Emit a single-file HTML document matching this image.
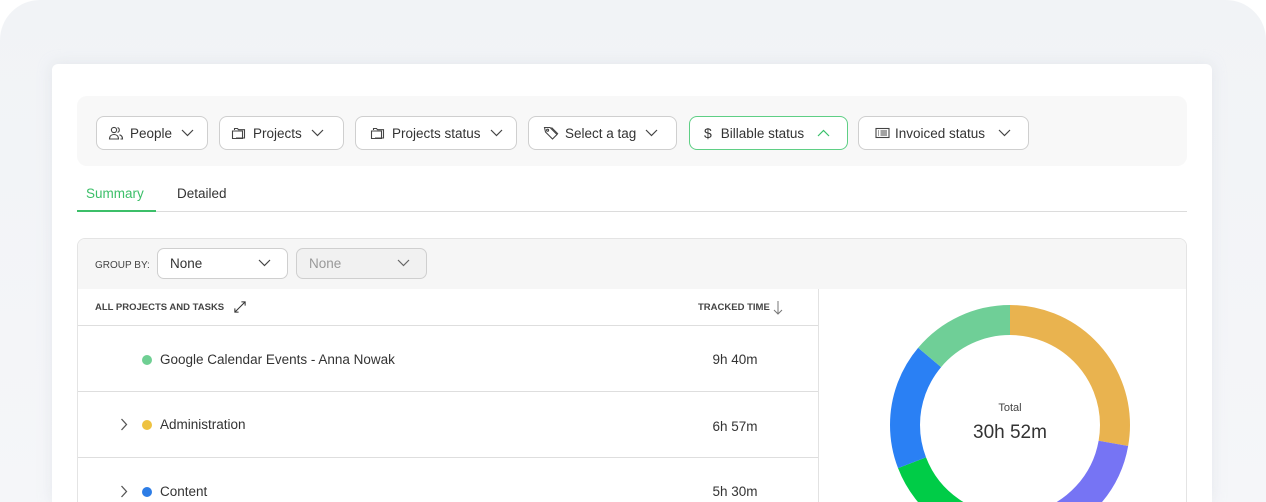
<!DOCTYPE html>
<html style="overflow:hidden;height:502px"><head><meta charset="utf-8"><style>
*{box-sizing:border-box;margin:0;padding:0}
html,body{width:1266px;height:502px;overflow:hidden}
body{background:#fff;font-family:"Liberation Sans",sans-serif;color:#333;position:relative}
.wrap{position:absolute;left:0;top:0;width:1266px;height:502px;overflow:hidden}
.bg{position:absolute;left:0;top:0;width:1266px;height:502px;border-radius:40px 40px 0 0;background:linear-gradient(180deg,#f1f3f6,#f5f6f9)}
.card{position:absolute;left:52px;top:64px;width:1160px;height:438px;background:#fff;border-radius:6px 6px 0 0;box-shadow:0 0 14px rgba(200,205,215,.35)}
.fbar{position:absolute;left:77px;top:96px;width:1110px;height:70px;background:#f8f8f8;border-radius:10px}
.btn{position:absolute;top:116px;height:34px;border:1px solid #cfcfcf;border-radius:8px;background:#fff;font-size:13.5px;color:#333;display:flex;align-items:center;padding-left:11px}
.btn svg{flex:none}
.btn .t{margin-left:6px}
.btn .ch{margin-left:9px}
.tabs{position:absolute;left:77px;top:211px;width:1110px;height:1px;background:#dcdcdc}
.tab{position:absolute;top:186px;font-size:13.5px}
.panel{position:absolute;left:77px;top:238px;width:1110px;height:264px;border:1px solid #e4e4e4;border-bottom:none;border-radius:8px 8px 0 0;overflow:hidden}
.gb{position:absolute;left:0;top:0;width:1110px;height:50px;background:#f6f6f6}
.sel{position:absolute;top:9px;height:31px;border:1px solid #cfcfcf;border-radius:7px;background:#fff;font-size:13.5px;padding:7px 12px}
.sel svg{position:absolute;right:16px;top:10px}
.hd{position:absolute;font-size:9.5px;font-weight:bold;color:#444;letter-spacing:0}
.hl{position:absolute;left:0;width:740px;height:1px;background:#dedede}
.row{position:absolute;font-size:13.5px;color:#333}
.dot{position:absolute;width:10px;height:10px;border-radius:50%}
.tm{position:absolute;font-size:13.5px;color:#333;width:80px;text-align:center}
</style></head><body><div class="wrap">
<div class="bg"></div>
<div class="card"></div>
<div class="fbar"></div>

<div class="btn" style="left:96px;width:112px">
<svg width="16" height="16" viewBox="0 0 16 16" fill="none" stroke="#444" stroke-width="1.1"><circle cx="6" cy="5" r="2.6"/><path d="M1.5 14c0-3 2-4.5 4.5-4.5S10.5 11 10.5 14z"/><path d="M9.5 2.6a2.5 2.5 0 0 1 0 4.8M11.5 9.8c1.8.5 3 1.8 3 4.2h-2"/></svg>
<span class="t">People</span><svg class="ch" width="13" height="8" viewBox="0 0 13 8" fill="none" stroke="#444" stroke-width="1.2"><path d="M1 1l5.5 5.5L12 1"/></svg></div>
<div class="btn" style="left:219px;width:125px">
<svg width="16" height="16" viewBox="0 0 16 16" fill="none" stroke="#444" stroke-width="1.1"><path d="M3.5 5V3.5h3l1 1.2h6v8.3H5"/><path d="M1.5 6h10v7.5h-10z"/></svg>
<span class="t">Projects</span><svg class="ch" width="13" height="8" viewBox="0 0 13 8" fill="none" stroke="#444" stroke-width="1.2"><path d="M1 1l5.5 5.5L12 1"/></svg></div>
<div class="btn" style="left:355px;width:162px;padding-left:14px">
<svg width="16" height="16" viewBox="0 0 16 16" fill="none" stroke="#444" stroke-width="1.1"><path d="M3.5 5V3.5h3l1 1.2h6v8.3H5"/><path d="M1.5 6h10v7.5h-10z"/></svg>
<span class="t">Projects status</span><svg class="ch" width="13" height="8" viewBox="0 0 13 8" fill="none" stroke="#444" stroke-width="1.2"><path d="M1 1l5.5 5.5L12 1"/></svg></div>
<div class="btn" style="left:528px;width:149px;padding-left:14px">
<svg width="16" height="16" viewBox="0 0 16 16" fill="none" stroke="#444" stroke-width="1.1"><path d="M1.5 2.5h5.5l7 7-4.5 4.5-7-7z"/><circle cx="4.6" cy="5.2" r="1"/><path d="M8.5 2.5l6.5 6.5"/></svg>
<span class="t">Select a tag</span><svg class="ch" width="13" height="8" viewBox="0 0 13 8" fill="none" stroke="#444" stroke-width="1.2"><path d="M1 1l5.5 5.5L12 1"/></svg></div>
<div class="btn" style="left:689px;width:159px;border-color:#5fcf85;padding-left:14px">
<span style="font-size:14px">$</span>
<span class="t" style="margin-left:9px">Billable status</span><svg class="ch" style="margin-left:13px" width="13" height="8" viewBox="0 0 13 8" fill="none" stroke="#39c06a" stroke-width="1.2"><path d="M1 7l5.5-5.5L12 7"/></svg></div>
<div class="btn" style="left:858px;width:171px;padding-left:16px">
<svg width="15" height="12" viewBox="0 0 15 12" fill="none" stroke="#444" stroke-width="1.1"><rect x="1" y="1.5" width="13" height="9"/><path d="M3 4h1M3 6h1M3 8h1M5.5 4h6.5M5.5 6h6.5M5.5 8h6.5"/></svg>
<span class="t" style="margin-left:5px">Invoiced status</span><svg class="ch" style="margin-left:13px" width="13" height="8" viewBox="0 0 13 8" fill="none" stroke="#444" stroke-width="1.2"><path d="M1 1l5.5 5.5L12 1"/></svg></div>

<div class="tab" style="left:86px;color:#3cbf69">Summary</div>
<div class="tab" style="left:177px">Detailed</div>
<div class="tabs"></div>
<div style="position:absolute;left:77px;top:210px;width:79px;height:2px;background:#3cbf69"></div>

<div class="panel">
<div class="gb"></div>
<div class="hd" style="left:17px;top:21px;font-weight:normal;font-size:10px;color:#444">GROUP BY:</div>
<div class="sel" style="left:79px;width:131px">None<svg width="13" height="8" viewBox="0 0 13 8" fill="none" stroke="#444" stroke-width="1.2"><path d="M1 1l5.5 5.5L12 1"/></svg></div>
<div class="sel" style="left:218px;width:131px;background:#f1f1f1;color:#999">None<svg width="13" height="8" viewBox="0 0 13 8" fill="none" stroke="#666" stroke-width="1.2"><path d="M1 1l5.5 5.5L12 1"/></svg></div>
<div style="position:absolute;left:740px;top:50px;width:1px;height:214px;background:#e2e2e2"></div>
<div class="hd" style="left:17px;top:63px">ALL PROJECTS AND TASKS</div>
<svg style="position:absolute;left:155px;top:61px" width="14" height="14" viewBox="0 0 15 15" fill="none" stroke="#333" stroke-width="1.1"><path d="M2 13L13 2M9 2h4v4M2 9v4h4"/></svg>
<div class="hd" style="left:620px;top:63px">TRACKED TIME</div>
<svg style="position:absolute;left:695px;top:61px" width="10" height="15" viewBox="0 0 10 15" fill="none" stroke="#777" stroke-width="1"><path d="M5 1v13M1 10l4 4 4-4"/></svg>
<div class="hl" style="top:86px"></div>
<div class="hl" style="top:152px"></div>
<div class="hl" style="top:218px"></div>
<div class="dot" style="left:64px;top:116px;background:#6fcf93"></div>
<div class="row" style="left:82px;top:113px">Google Calendar Events - Anna Nowak</div>
<div class="tm" style="left:617px;top:113px">9h 40m</div>
<svg style="position:absolute;left:42px;top:179px" width="8" height="13" viewBox="0 0 8 13" fill="none" stroke="#555" stroke-width="1.3"><path d="M1.5 1l5 5.5-5 5.5"/></svg>
<div class="dot" style="left:64px;top:181px;background:#eec241"></div>
<div class="row" style="left:82px;top:178px">Administration</div>
<div class="tm" style="left:617px;top:180px">6h 57m</div>
<svg style="position:absolute;left:42px;top:246px" width="8" height="13" viewBox="0 0 8 13" fill="none" stroke="#555" stroke-width="1.3"><path d="M1.5 1l5 5.5-5 5.5"/></svg>
<div class="dot" style="left:64px;top:248px;background:#2d7de6"></div>
<div class="row" style="left:82px;top:245px">Content</div>
<div class="tm" style="left:617px;top:245px">5h 30m</div>
</div>

<svg style="position:absolute;left:880px;top:295px" width="260" height="207" viewBox="0 0 260 207">
<g transform="rotate(-90 130 130)" fill="none" stroke-width="30">
<circle cx="130" cy="130" r="105" stroke="#e9b34f" stroke-dasharray="183.3 1000" stroke-dashoffset="0"/>
<circle cx="130" cy="130" r="105" stroke="#7674f4" stroke-dasharray="120 1000" stroke-dashoffset="-183.3"/>
<circle cx="130" cy="130" r="105" stroke="#00cc47" stroke-dasharray="154 1000" stroke-dashoffset="-302"/>
<circle cx="130" cy="130" r="105" stroke="#2a80f4" stroke-dasharray="112 1000" stroke-dashoffset="-456"/>
<circle cx="130" cy="130" r="105" stroke="#6fcf97" stroke-dasharray="92 1000" stroke-dashoffset="-568"/>
</g></svg>
<div style="position:absolute;left:960px;top:402px;width:100px;text-align:center;font-size:11px;color:#444">Total</div>
<div style="position:absolute;left:930px;top:422px;width:160px;text-align:center;font-size:19px;color:#333">30h 52m</div>
</div></body></html>
